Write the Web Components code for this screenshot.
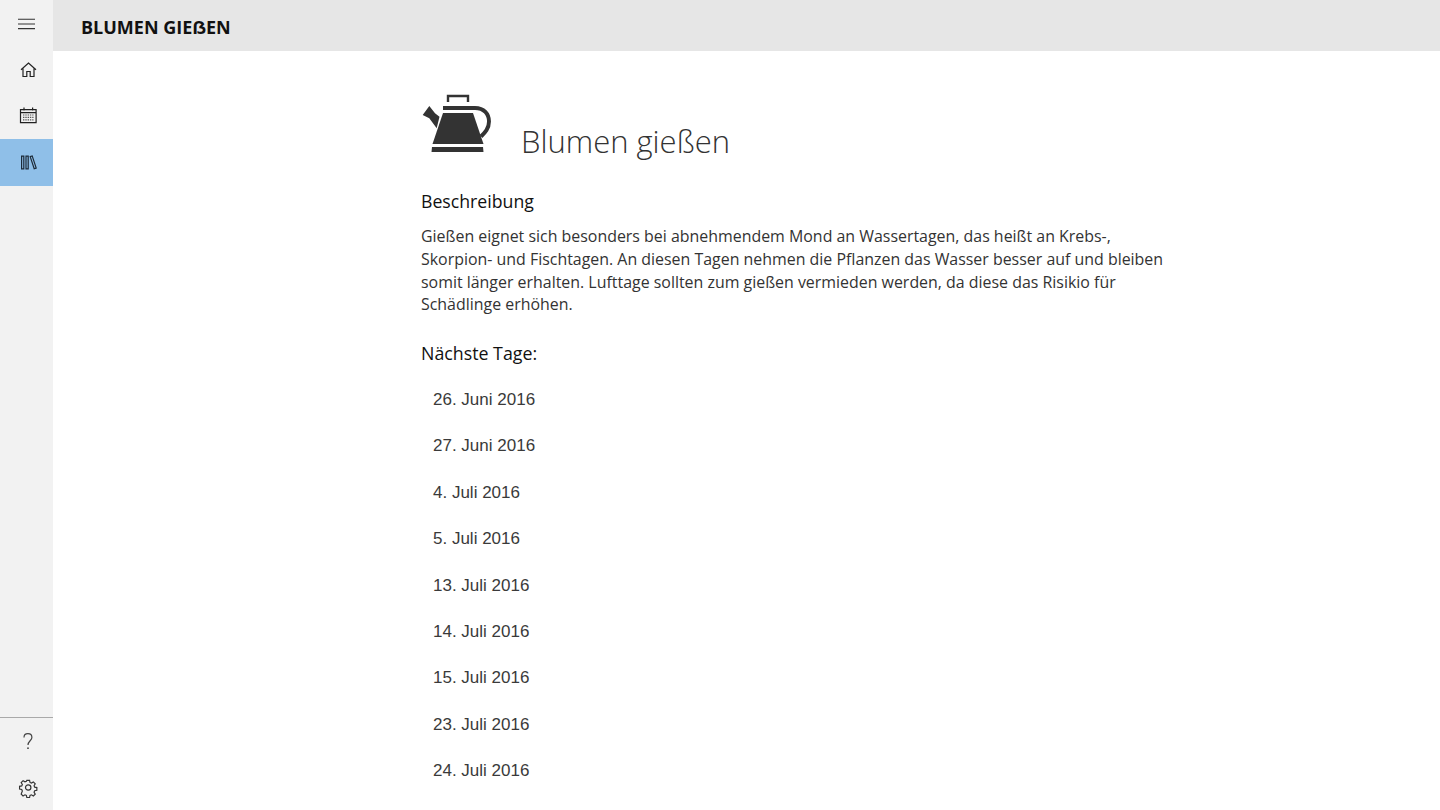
<!DOCTYPE html>
<html lang="de">
<head>
<meta charset="utf-8">
<title>Blumen gießen</title>
<style>
  html, body { height: 100%; margin: 0; overflow: hidden; background: #fff; }
  body { font-family: "Open Sans", "Noto Sans", sans-serif; }
</style>
</head>
<body>
<app-shell>
  <nav-rail slot="nav">
    <nav-item icon="menu"></nav-item>
    <nav-item icon="home"></nav-item>
    <nav-item icon="calendar"></nav-item>
    <nav-item icon="books" active></nav-item>
    <nav-item slot="bottom" icon="help"></nav-item>
    <nav-item slot="bottom" icon="gear"></nav-item>
  </nav-rail>
  <title-bar slot="header">BLUMEN GIEẞEN</title-bar>
  <detail-page heading="Blumen gießen">
    <detail-section heading="Beschreibung">Gießen eignet sich besonders bei abnehmendem Mond an Wassertagen, das heißt an Krebs-, Skorpion- und Fischtagen. An diesen Tagen nehmen die Pflanzen das Wasser besser auf und bleiben somit länger erhalten. Lufttage sollten zum gießen vermieden werden, da diese das Risikio für Schädlinge erhöhen.</detail-section>
    <date-list heading="Nächste Tage:">
      <date-row>26. Juni 2016</date-row>
      <date-row>27. Juni 2016</date-row>
      <date-row>4. Juli 2016</date-row>
      <date-row>5. Juli 2016</date-row>
      <date-row>13. Juli 2016</date-row>
      <date-row>14. Juli 2016</date-row>
      <date-row>15. Juli 2016</date-row>
      <date-row>23. Juli 2016</date-row>
      <date-row>24. Juli 2016</date-row>
    </date-list>
  </detail-page>
</app-shell>

<script>
  const ICONS = {
    menu: `<path d="M1 6.3h17M1 11h17M1 15.6h17" fill="none" stroke="#333" stroke-width="1.1"/>`,
    home: `<path d="M4 10.8 11.5 4l7.5 6.8M6 9v8.5h3.8v-5h3.4v5H17V9" fill="none" stroke="#222" stroke-width="1.2"/>`,
    calendar: `<path d="M3.5 4.6h15.6v13H3.5zM3.5 7.6h15.6M7 2.4v3.2M15.6 2.4v3.2" fill="none" stroke="#222" stroke-width="1.2"/><path d="M6 10h10.5M6 12.4h10.5M6 14.8h10.5" fill="none" stroke="#555" stroke-width="1.2" stroke-dasharray="1.4 .9"/>`,
    books: `<path d="M4.6 4.2h2.2v12.6H4.6zM9 4.2h2.2v12.6H9zM13.2 4.6l2-.7 4 12.2-2 .7z" fill="none" stroke="#1c2a38" stroke-width="1.2"/>`,
    help: `<path d="M7 6.5C7 4 8.9 2.7 10.9 2.7c2.2 0 4 1.5 4 3.7 0 3.2-3.9 3.6-3.9 7.6" fill="none" stroke="#444" stroke-width="1.2"/><circle cx="11" cy="17.2" r=".9" fill="#444"/>`,
    gear: `<circle cx="11.2" cy="10.5" r="2.7" fill="none" stroke="#333" stroke-width="1.2"/><path d="M9 2.5h3l.5 2.4 1.6.7 2.1-1.3 2.1 2.1-1.3 2.1.7 1.6 2.4.5v3l-2.4.5-.7 1.6 1.3 2.1-2.1 2.1-2.1-1.3-1.6.7-.5 2.4H9l-.5-2.4-1.6-.7-2.1 1.3-2.1-2.1L4 14.3l-.7-1.6-2.4-.5v-3l2.4-.5.7-1.6-1.3-2.1 2.1-2.1 2.1 1.3 1.6-.7z" transform="translate(1.75 1.05) scale(.9)" fill="none" stroke="#333" stroke-width="1.3"/>`
  };

  class AppShell extends HTMLElement {
    constructor() {
      super();
      this.attachShadow( {mode: 'open'} ).innerHTML = `
        <style>
          :host {
            display: grid;
            grid-template-columns: 53px 1fr;
            grid-template-rows: 51px 1fr;
            height: 810px;
          }
          ::slotted( [slot=nav] ) { grid-row: 1 / 3; }
        </style>
        <slot name="nav"></slot>
        <slot name="header"></slot>
        <slot></slot>
      `;
    }
  }
  customElements.define( 'app-shell', AppShell );

  class NavRail extends HTMLElement {
    constructor() {
      super();
      this.attachShadow( {mode: 'open'} ).innerHTML = `
        <style>
          :host {
            background: #f2f2f2;
            display: flex;
            flex-direction: column;
            justify-content: space-between;
            height: 810px;
          }
          div:last-child {
            border-top: 1px solid #a9a9a9;
            height: 92px;
          }
        </style>
        <div><slot></slot></div>
        <div><slot name="bottom"></slot></div>
      `;
    }
  }
  customElements.define( 'nav-rail', NavRail );

  class NavItem extends HTMLElement {
    connectedCallback() {
      const icon = ICONS[this.getAttribute( 'icon' )] || '';
      this.attachShadow( {mode: 'open'} ).innerHTML = `
        <style>
          :host {
            align-items: center;
            box-sizing: border-box;
            display: flex;
            height: 46.4px;
            justify-content: center;
            padding-left: 2px;
          }
          :host( [active] ) { background: #8fbfe8; }
          svg { display: block; height: 21px; width: 21px; }
        </style>
        <svg viewBox="0 0 21 21">${icon}</svg>
      `;
    }
  }
  customElements.define( 'nav-item', NavItem );

  class TitleBar extends HTMLElement {
    constructor() {
      super();
      this.attachShadow( {mode: 'open'} ).innerHTML = `
        <style>
          :host {
            align-items: center;
            background: #e6e6e6;
            color: #111;
            display: flex;
            font-size: 18px;
            font-weight: 700;
            height: 51px;
            padding: 2px 0 0 28px;
            box-sizing: border-box;
          }
        </style>
        <slot></slot>
      `;
    }
  }
  customElements.define( 'title-bar', TitleBar );

  class DetailPage extends HTMLElement {
    connectedCallback() {
      this.attachShadow( {mode: 'open'} ).innerHTML = `
        <style>
          :host {
            display: block;
            padding: 43px 0 0 368px;
            width: 752px;
          }
          header {
            align-items: flex-end;
            display: flex;
            gap: 26px;
            height: 72px;
            margin-bottom: 22px;
          }
          svg { display: block; flex: none; height: 64px; margin-bottom: 11px; width: 74px; }
          h1 {
            color: #333;
            font-size: 31px;
            font-weight: 300;
            line-height: 40px;
            margin: 0 0 5px 0;
          }
        </style>
        <header>
          <svg viewBox="0 0 74 64">
            <path d="M27 11V5h20v6" fill="none" stroke="#333" stroke-width="2.4"/>
            <path d="M22 17H54c9 0 14 6 14 13.5 0 7-4 11-8 15" fill="none" stroke="#333" stroke-width="3.9"/>
            <path d="M22 22h30l10.5 31H11.5z" fill="#333"/>
            <path d="M11 56h51l.5 5h-52z" fill="#333"/>
            <path d="M1.7 24l6.6-9 5.7 7.3 4.5 3.4-2.8 11.6-7.4-10z" fill="#333"/>
          </svg>
          <h1>${this.getAttribute( 'heading' )}</h1>
        </header>
        <slot></slot>
      `;
    }
  }
  customElements.define( 'detail-page', DetailPage );

  class DetailSection extends HTMLElement {
    connectedCallback() {
      this.attachShadow( {mode: 'open'} ).innerHTML = `
        <style>
          :host { display: block; margin-bottom: 24.2px; }
          h2 {
            color: #111;
            font-size: 17.7px;
            font-weight: 400;
            line-height: 26px;
            margin: 0 0 11.3px 0;
          }
          p {
            color: #333;
            font-size: 15.93px;
            line-height: 22.7px;
            margin: 0;
          }
        </style>
        <h2>${this.getAttribute( 'heading' )}</h2>
        <p><slot></slot></p>
      `;
    }
  }
  customElements.define( 'detail-section', DetailSection );

  class DateList extends HTMLElement {
    connectedCallback() {
      this.attachShadow( {mode: 'open'} ).innerHTML = `
        <style>
          :host { display: block; }
          h2 {
            color: #111;
            font-size: 17.8px;
            font-weight: 400;
            line-height: 26px;
            margin: 0 0 10.6px 0;
          }
        </style>
        <h2>${this.getAttribute( 'heading' )}</h2>
        <slot></slot>
      `;
    }
  }
  customElements.define( 'date-list', DateList );

  class DateRow extends HTMLElement {
    constructor() {
      super();
      this.attachShadow( {mode: 'open'} ).innerHTML = `
        <style>
          :host {
            align-items: center;
            color: #3a3a3a;
            display: flex;
            font-family: "Liberation Sans", Arial, sans-serif;
            font-size: 17px;
            height: 46.4px;
            padding-left: 12px;
          }
        </style>
        <slot></slot>
      `;
    }
  }
  customElements.define( 'date-row', DateRow );
</script>
</body>
</html>
